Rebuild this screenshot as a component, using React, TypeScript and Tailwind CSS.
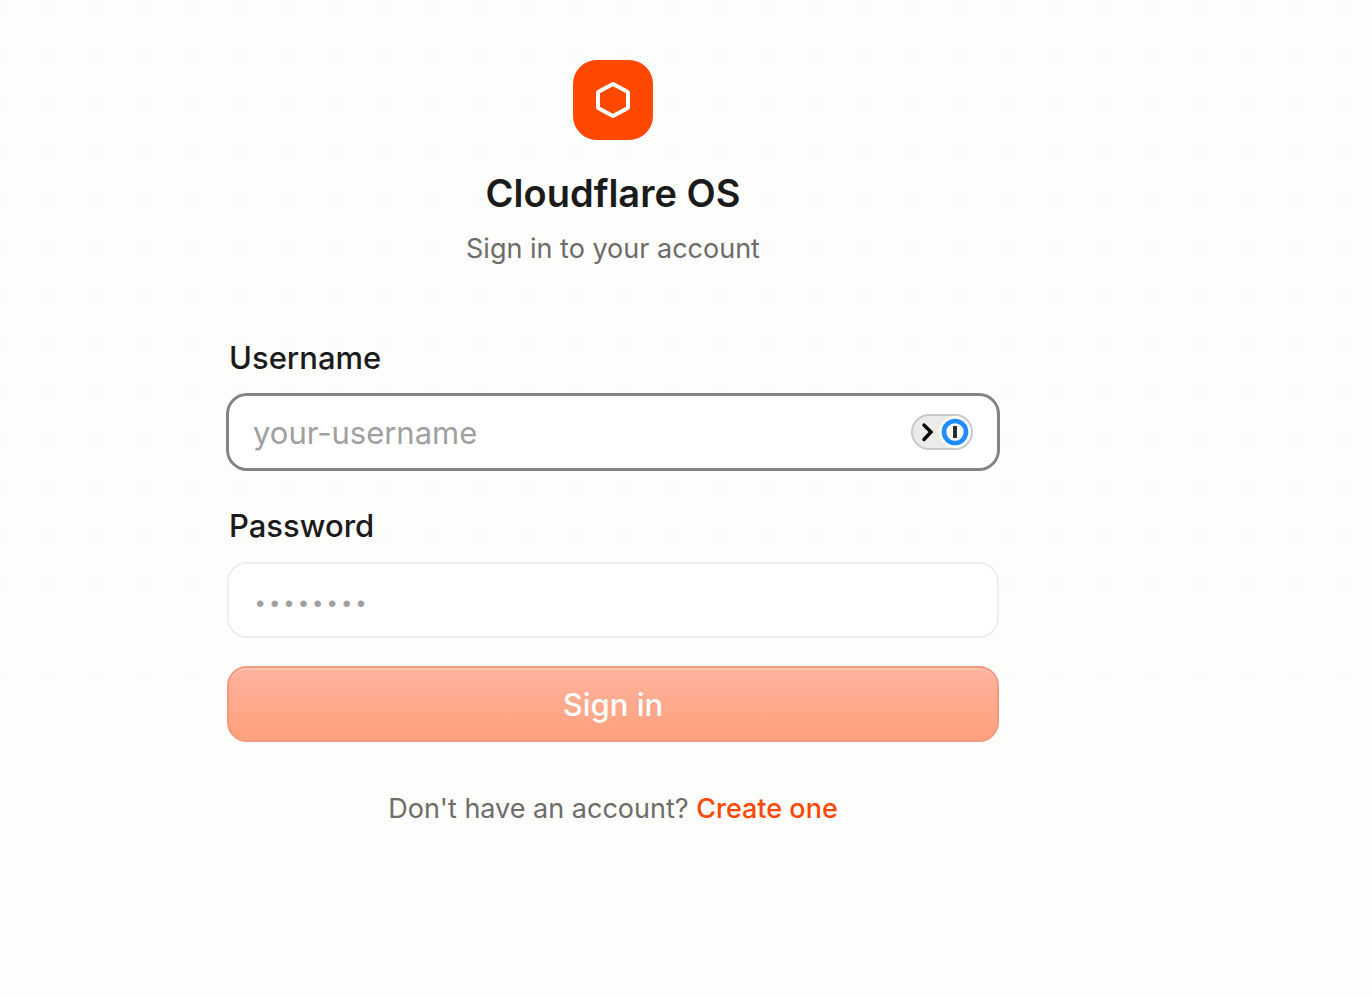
import React, { useState } from 'react';

const inputClass =
  'block w-full h-[76px] rounded-[20px] border-2 bg-white px-6 text-[31px] text-[#1b1b1b] placeholder:text-[#a0a0a0] outline-none';

const labelClass = 'block pl-[2px] text-[31px] leading-[48px] font-medium text-[#1b1b1b]';

const HexagonIcon: React.FC = () => (
  <svg viewBox="0 0 40 40" className="w-10 h-10" fill="none" aria-hidden="true">
    <path
      d="M20 4 L34 11.5 Q35 12 35 13 V27 Q35 28 34 28.5 L20 36 L6 28.5 Q5 28 5 27 V13 Q5 12 6 11.5 Z"
      stroke="white"
      strokeWidth="4"
      strokeLinejoin="round"
    />
  </svg>
);

const AutofillButton: React.FC = () => (
  <button
    type="button"
    aria-label="Fill with saved login"
    className="absolute right-[26px] top-5 h-9 w-[62px]"
  >
    <svg viewBox="0 0 62 36" className="w-full h-full" fill="none">
      <rect x="1" y="1" width="60" height="34" rx="17" fill="#ebebea" stroke="#c9c9c9" strokeWidth="2" />
      <circle cx="44" cy="18" r="16" fill="white" />
      <circle cx="44" cy="18" r="11" stroke="#1f8cff" strokeWidth="4.6" />
      <rect x="42" y="12" width="4" height="12" fill="#2d2d2d" />
      <path d="M13 11 L20 18 L13 25.5" stroke="black" strokeWidth="3.4" strokeLinecap="round" />
    </svg>
  </button>
);

export default function App() {
  const [username, setUsername] = useState('');
  const [password, setPassword] = useState('');

  return (
    <div className="relative min-h-screen bg-[#fdfdfb] font-[Inter,sans-serif]">
      <div className="pointer-events-none absolute inset-0 bg-[radial-gradient(circle,#f4f4f3_2px,transparent_2px)] bg-[length:48px_48px] bg-[position:-24px_-16px] [mask-image:linear-gradient(to_bottom,black,transparent_1000px)]" />

      <main className="relative flex flex-col items-center pt-[60px] pb-10 pl-6 pr-[170px]">
        <div className="flex h-20 w-20 items-center justify-center rounded-3xl bg-[#ff4801]">
          <HexagonIcon />
        </div>
        <h1 className="mt-7 text-[38px] leading-[50px] font-semibold text-[#1b1b1b]">Cloudflare OS</h1>
        <p className="mt-3 text-[27px] leading-[38px] text-[#6e6c6a]">Sign in to your account</p>

        <form className="mt-[66px] w-full max-w-[772px]" onSubmit={(e) => e.preventDefault()}>
          <label htmlFor="username" className={labelClass}>
            Username
          </label>
          <div className="relative mt-3">
            <input
              id="username"
              type="text"
              placeholder="your-username"
              value={username}
              onChange={(e) => setUsername(e.target.value)}
              className={`${inputClass} border-[#848484] ring-1 ring-[#848484]`}
            />
            <AutofillButton />
          </div>

          <label htmlFor="password" className={`${labelClass} mt-8`}>
            Password
          </label>
          <input
            id="password"
            type="password"
            placeholder="••••••••"
            value={password}
            onChange={(e) => setPassword(e.target.value)}
            className={`${inputClass} mt-3 border-[#eeeeed] placeholder:font-['Liberation_Mono',monospace] placeholder:text-[24px]`}
          />

          <button
            type="submit"
            className="mt-7 block h-[76px] w-full rounded-[20px] border-2 border-[#f29a7e] bg-linear-to-b from-[#ffb29e] to-[#fea07c] pt-[2px] text-[31px] font-medium text-white shadow-[inset_0_2px_0_#ffc1b0]"
          >
            Sign in
          </button>
        </form>

        <p className="mt-12 text-[27px] leading-[38px] text-[#6e6c6a]">
          Don't have an account?{' '}
          <a href="#signup" className="font-medium text-[#ff4801]">
            Create one
          </a>
        </p>
      </main>
    </div>
  );
}
